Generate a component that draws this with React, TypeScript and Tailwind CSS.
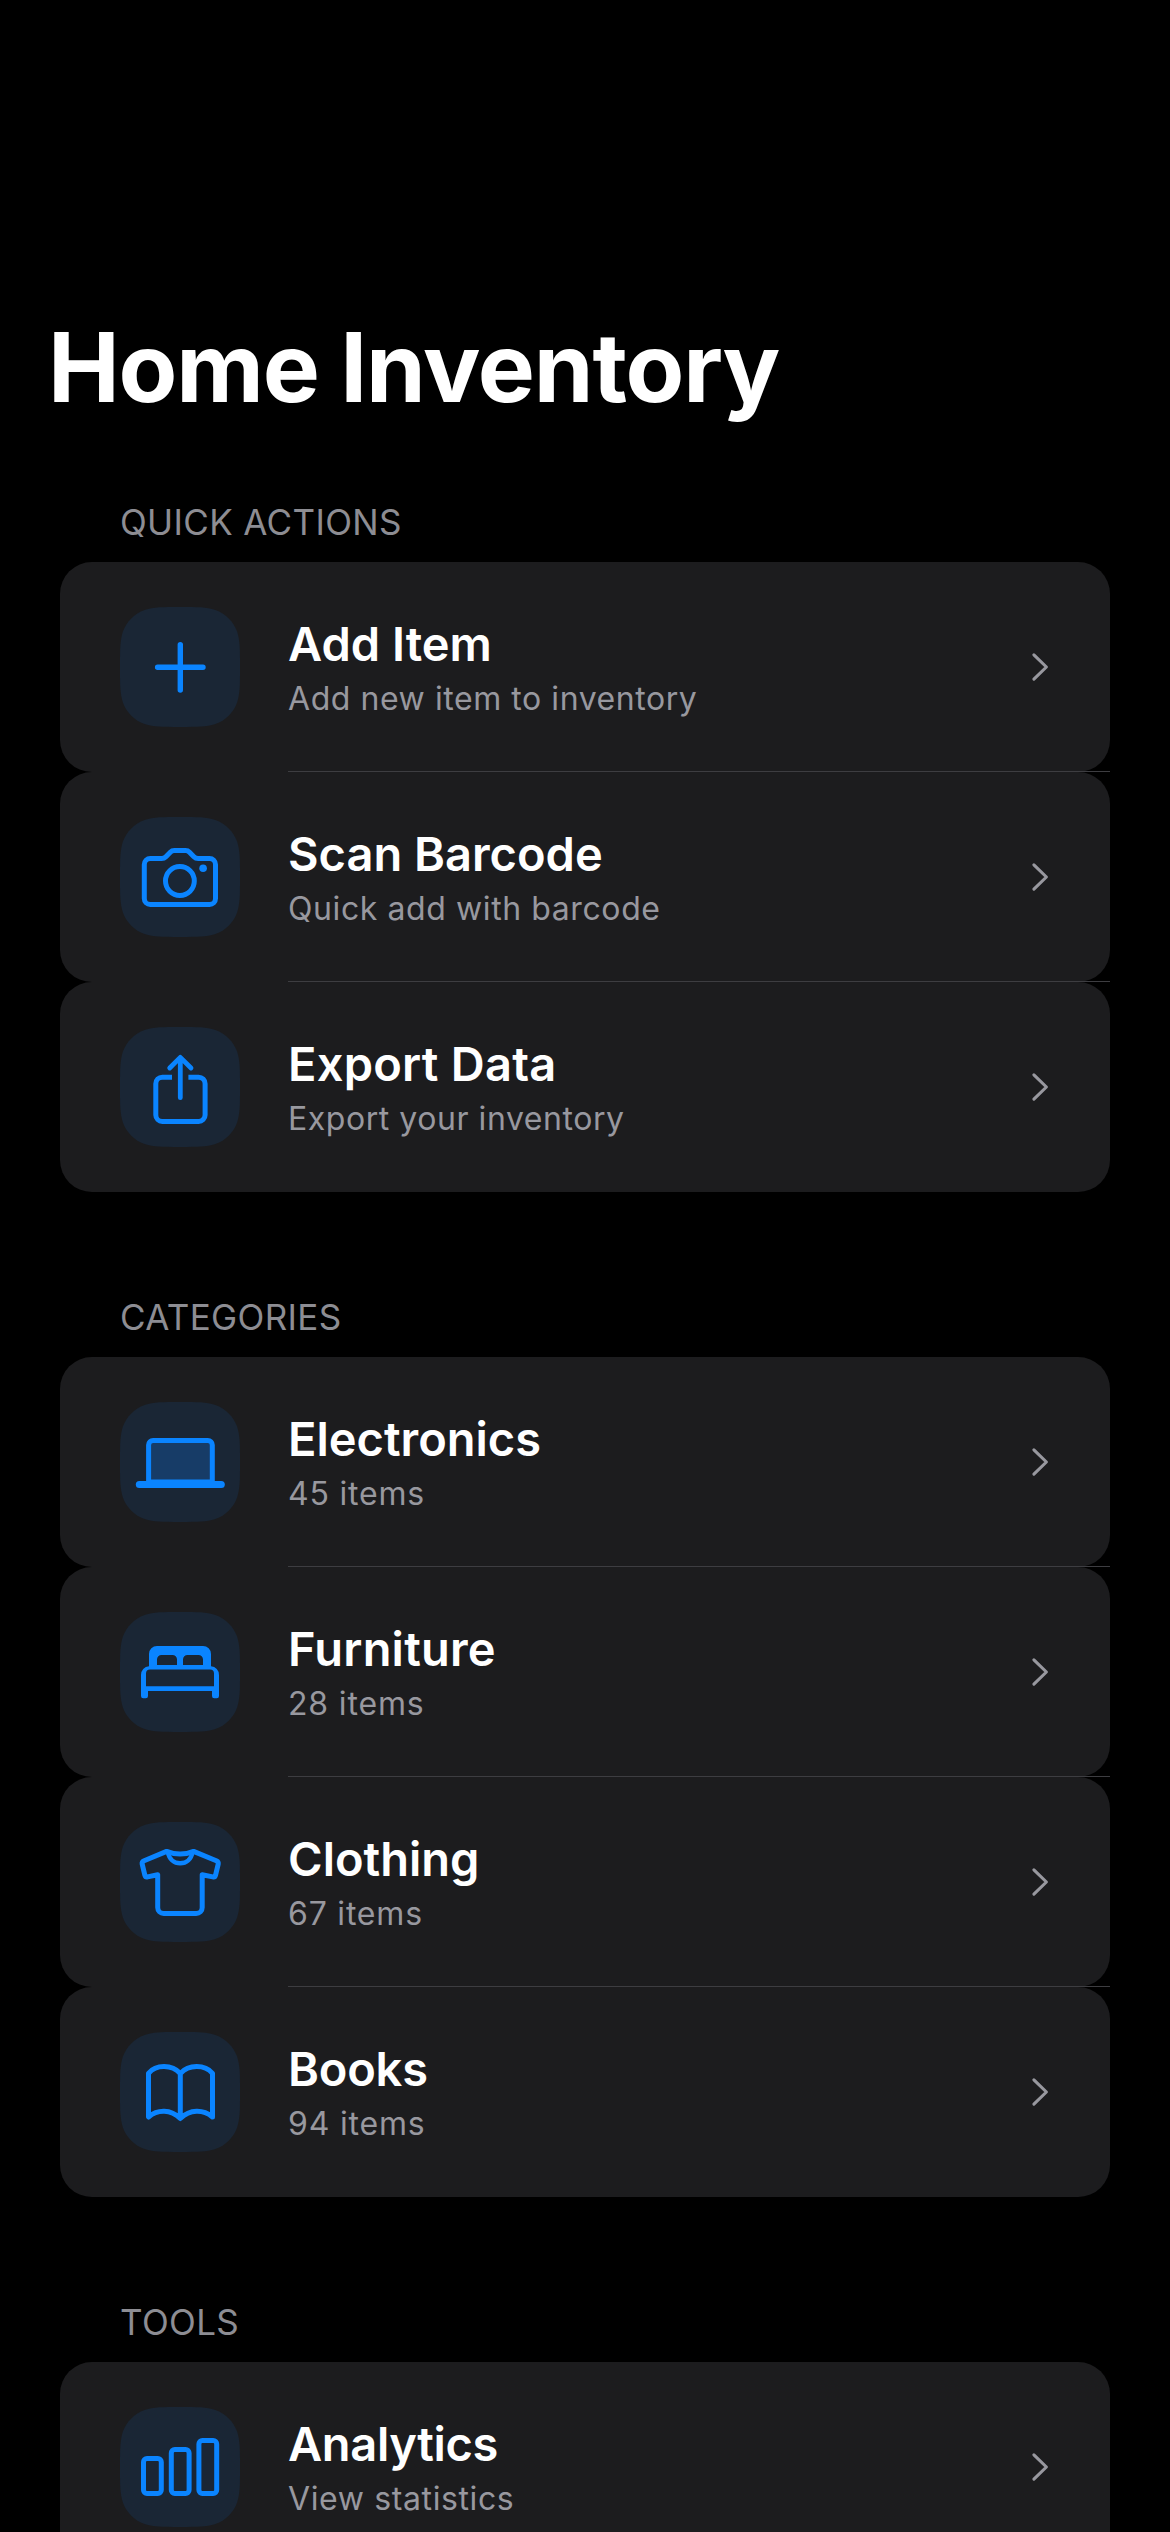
import type { ReactNode } from "react";

type Item = { icon: ReactNode; title: string; sub: string; track: string };

const TILE =
  "M0 59.6C0 42.5 0 33.9 2.9 24.6C6.6 14.5 14.5 6.6 24.6 2.9C33.9 0 42.5 0 59.6 0H60.4C77.5 0 86.1 0 95.4 2.9C105.5 6.6 113.4 14.5 117.1 24.6C120 33.9 120 42.5 120 59.6V60.4C120 77.5 120 86.1 117.1 95.4C113.4 105.5 105.5 113.4 95.4 117.1C86.1 120 77.5 120 60.4 120H59.6C42.5 120 33.9 120 24.6 117.1C14.5 113.4 6.6 105.5 2.9 95.4C0 86.1 0 77.5 0 60.4Z";

function Tile({ children }: { children: ReactNode }) {
  return (
    <svg
      viewBox="0 0 120 120"
      className="size-[120px] shrink-0 text-[#0a84ff]"
      fill="none"
      stroke="currentColor"
      strokeWidth={5}
      strokeLinecap="round"
      strokeLinejoin="round"
    >
      <path d={TILE} fill="#1a2635" stroke="none" />
      {children}
    </svg>
  );
}

const plus = <path d="M37.6 60.3H83M60.3 37.6V83" strokeWidth={5.4} />;

const camera = (
  <>
    <path d="M24.3 47.5a6 6 0 0 1 6-6H41.6q2.6 0 4.3-1.8l4.4-4.5q1.6-1.7 4-1.7h11.2q2.4 0 4 1.7l4.4 4.5q1.7 1.8 4.3 1.8H89.5a6 6 0 0 1 6 6V81.5a6 6 0 0 1-6 6H30.3a6 6 0 0 1-6-6Z" />
    <circle cx="59.9" cy="64" r="14.4" />
    <circle cx="83.1" cy="51.3" r="3.8" fill="currentColor" stroke="none" />
  </>
);

const share = (
  <>
    <path d="M52 50.2H42.3a6.5 6.5 0 0 0-6.5 6.5V88a6.5 6.5 0 0 0 6.5 6.5H78.6a6.5 6.5 0 0 0 6.5-6.5V56.7a6.5 6.5 0 0 0-6.5-6.5H68.4" strokeLinecap="butt" />
    <path d="M60.3 31V70.7M49.7 41L60.3 30.4L71 41" strokeWidth={4.8} />
  </>
);

const laptop = (
  <>
    <path d="M28.6 80V43a4.5 4.5 0 0 1 4.5-4.5H87.8a4.5 4.5 0 0 1 4.5 4.5V80Z" fill="#173c67" strokeLinecap="butt" />
    <rect x="15.8" y="79" width="89" height="7" rx="3.5" fill="currentColor" stroke="none" />
  </>
);

const bed = (
  <path
    fill="currentColor"
    stroke="none"
    fillRule="evenodd"
    d="M29 54V42a8 8 0 0 1 8-8H83a8 8 0 0 1 8 8V54.2A8.6 8.6 0 0 1 99 63V84a2.2 2.2 0 0 1-2.2 2.2H94.2A2.2 2.2 0 0 1 92 84V79H28V84a2.2 2.2 0 0 1-2.2 2.2H23.2A2.2 2.2 0 0 1 21 84V63A8.6 8.6 0 0 1 29 54.2ZM37 53H57V47.5A4.5 4.5 0 0 0 52.5 43H41.5A4.5 4.5 0 0 0 37 47.5ZM63 53H83V47.5A4.5 4.5 0 0 0 78.5 43H67.5A4.5 4.5 0 0 0 63 47.5ZM26 61.5V74.2H94V61.5A4 4 0 0 0 90 57.5H30A4 4 0 0 0 26 61.5Z"
  />
);

const shirt = (
  <>
    <path d="M46.6 29.4L24.1 38.7Q21.7 39.8 22.2 42.2L24.9 53.3Q25.5 55.4 27.6 54.9L37.7 52.7V85.5a6 6 0 0 0 6 6H76.2a6 6 0 0 0 6-6V52.7L92.8 54.9Q94.9 55.4 95.5 53.3L98.2 42.2Q98.7 39.8 96.3 38.7L73.6 29.4Q60.2 34.8 46.6 29.4Z" />
    <path d="M47.8 30C49.2 37.2 53.9 41.3 60.2 41.3C66.5 41.3 71.2 37.2 72.6 30" strokeWidth={4.4} />
  </>
);

const book = (
  <path d="M28.5 41.3C36 32.3 52 32.3 60.3 41.5C68.6 32.3 84.8 32.3 92.5 41.3V85C83 77.2 70 77.2 60.3 86.5C50.6 77.2 37.8 77.2 28.5 85ZM60.3 41.5V86" />
);

const chart = (
  <>
    <rect x="23.5" y="51.5" width="17.8" height="35" rx="3.5" />
    <rect x="51.3" y="42.5" width="17.8" height="44" rx="3.5" />
    <rect x="78.9" y="33.5" width="17.8" height="53" rx="3.5" />
  </>
);

const sections: { name: string; items: Item[] }[] = [
  {
    name: "QUICK ACTIONS",
    items: [
      { icon: plus, title: "Add Item", sub: "Add new item to inventory", track: "tracking-[0.56px]" },
      { icon: camera, title: "Scan Barcode", sub: "Quick add with barcode", track: "tracking-[0.59px]" },
      { icon: share, title: "Export Data", sub: "Export your inventory", track: "tracking-[0.55px]" },
    ],
  },
  {
    name: "CATEGORIES",
    items: [
      { icon: laptop, title: "Electronics", sub: "45 items", track: "tracking-[0.8px]" },
      { icon: bed, title: "Furniture", sub: "28 items", track: "tracking-[0.85px]" },
      { icon: shirt, title: "Clothing", sub: "67 items", track: "tracking-[0.8px]" },
      { icon: book, title: "Books", sub: "94 items", track: "tracking-[0.8px]" },
    ],
  },
  {
    name: "TOOLS",
    items: [{ icon: chart, title: "Analytics", sub: "View statistics", track: "tracking-[0.62px]" }],
  },
];

const titleTracking: Record<string, string> = {
  Analytics: "tracking-[-0.35px]",
  Books: "tracking-[-0.2px]",
  Furniture: "tracking-[0.23px]",
  "Export Data": "tracking-[0.24px]",
};

function Row({ item, last }: { item: Item; last: boolean }) {
  return (
    <li className="relative flex h-[210px] items-center rounded-[32px] bg-[#1c1c1e] pr-[60px] pl-[60px]">
      <Tile>{item.icon}</Tile>
      <div className="ml-12 flex flex-1 flex-col gap-2">
        <span className={"text-[47px] leading-[55px] font-semibold text-white " + (titleTracking[item.title] ?? "")}>{item.title}</span>
        <span className={"text-[32px] leading-[40px] text-[#98989f] " + item.track}>{item.sub}</span>
      </div>
      <svg viewBox="0 0 20 32" className="h-8 w-5 text-[#98989f]" fill="none" stroke="currentColor" strokeWidth={3.1} strokeLinecap="round" strokeLinejoin="round">
        <path d="M3.9 3.8L16.4 16L3.9 28.2" />
      </svg>
      {!last && <div className="absolute right-0 bottom-0 left-[228px] z-10 h-px bg-[#3d3d41]" />}
    </li>
  );
}

export default function App() {
  return (
    <main className="h-[2532px] w-[1170px] overflow-hidden bg-black pt-[309px] font-[Inter,sans-serif]">
      <h1 className="pl-[48px] text-[96px] leading-[116px] font-bold tracking-[-1.16px] text-white">Home Inventory</h1>
      <div className="flex flex-col gap-[103px] px-[60px] pt-[75px]">
        {sections.map((s) => (
          <section key={s.name}>
            <h2 className="pb-[18px] pl-[60px] text-[35px] leading-[44px] tracking-[0.35px] text-[#8d8d93]">{s.name}</h2>
            <ul>
              {s.items.map((item, i) => (
                <Row key={item.title} item={item} last={i === s.items.length - 1} />
              ))}
            </ul>
          </section>
        ))}
      </div>
    </main>
  );
}
